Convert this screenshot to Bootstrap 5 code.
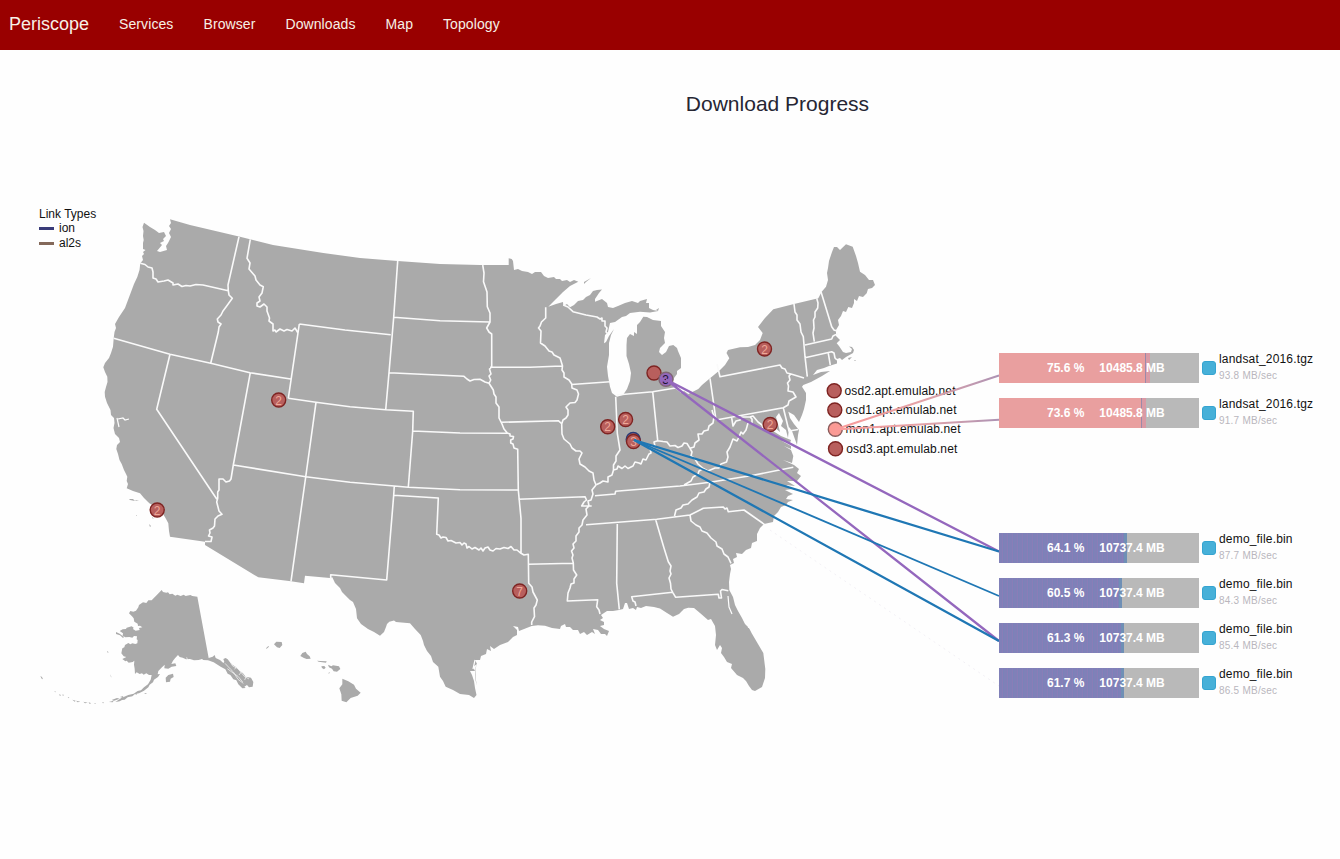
<!DOCTYPE html>
<html lang="en">
<head>
<meta charset="utf-8">
<meta name="viewport" content="width=device-width, initial-scale=1">
<title>Periscope - Download Progress</title>
<link rel="stylesheet" href="https://cdn.jsdelivr.net/npm/bootstrap@5.3.0/dist/css/bootstrap.min.css">
<style>
body{font-family:"Liberation Sans",Arial,sans-serif;background:#fefefe;color:#111;font-size:12px}
.topbar{background:#900;height:50px;padding:0 0 2px 9px}
.topbar .navbar-brand{font-size:18px;color:#f7f0e6;margin:0 15px 0 0;padding:0}
.topbar .navbar-nav .nav-link{font-size:14px;letter-spacing:.09px;color:#f7f0e6;padding:0 15px}
.stage{height:809px}
.page-title{font-size:21px;line-height:24px;color:#262633;padding:42px 0 0 215px;margin:0}
.canvas-map{position:absolute;left:0;top:-50px;pointer-events:none}
.legend-box{margin:91px 0 0 39px;line-height:14px}
.legend-box i{width:15px;height:3px;display:block}
.legend-ion{background:#393b79}
.legend-al2s{background:#84695a}
.legend-row + .legend-row{margin-top:1px}
.downloads{margin-top:237px;width:341px;gap:15px}
.dl{height:30px}
.dl-gap{margin-top:90px}
.meter{width:200px;height:30px;background:#b9b9b9;font-weight:bold;color:#fff;line-height:30px}
.meter-fill{height:30px}
.fill-red{background:linear-gradient(90deg,transparent calc(100% - 5px),#9a8aaa calc(100% - 5px),#9a8aaa calc(100% - 4px),#d99aa5 calc(100% - 4px)),#e99f9f}
.fill-blue{background:linear-gradient(90deg,transparent calc(100% - 3px),#6f8fb5 calc(100% - 3px)),repeating-linear-gradient(90deg,#8080b8 0 3px,#8a7db7 3px 4px,#7a83b8 4px 5px)}
.meter-text{position:absolute;inset:0;padding-left:48px;gap:15px}
.swatch-sq{width:14px;height:14px;border-radius:3px;background:#47b0d8;border:1px solid #35a4d1;margin:8px 3px 0}
.fname{line-height:14px;margin-top:-1px;letter-spacing:.18px}
.rate{font-size:10px;line-height:12px;margin-top:4px;color:#b9b6bd;letter-spacing:.24px}
</style>
</head>
<body>
<nav class="navbar navbar-expand topbar">
  <a class="navbar-brand" href="#">Periscope</a>
  <div class="navbar-nav">
    <a class="nav-link" href="#">Services</a>
    <a class="nav-link" href="#">Browser</a>
    <a class="nav-link" href="#">Downloads</a>
    <a class="nav-link" href="#">Map</a>
    <a class="nav-link" href="#">Topology</a>
  </div>
</nav>
<main class="stage position-relative overflow-hidden">
  <h1 class="page-title text-center fw-normal">Download Progress</h1>
  <svg class="canvas-map" width="1340" height="859" viewBox="0 0 1340 859" font-family="Liberation Sans, Arial, sans-serif" font-size="12">
    <defs>
      <linearGradient id="fade" x1="835" x2="999" y1="0" y2="0" gradientUnits="userSpaceOnUse"><stop offset="0" stop-color="#fb9a99"/><stop offset=".55" stop-color="#e2a3a8"/><stop offset="1" stop-color="#ad93b4"/></linearGradient>
    </defs>
    <!-- contiguous states -->
    <path fill="#aaa" d="M144 222.700L142.500 227 143.500 231 143 236 143.700 240 143 243 143 249 145.500 250 143 252 144 254 142 256 143 260 140.300 263.300 139.500 270 137.300 277 134 284 131 292 128 300 125 308 119 317 115 324 116 328 114.500 332 113.700 338.300 113 346.700 111 353 109 358 105 363 103.300 367.300 105 372 107.300 376.700 107.500 382 106 387 104.700 392 105 396.700 107 403 110.500 410 111 415 114 418 114.500 423 113.500 428 115 434 119 438 120 442 117 445 116.300 449 118 454 119.500 460 121.700 464 124 470 126 474 127.300 476.700 126.700 481 128 484 126.700 488.300 133 491 140 493.300 144 498 149.300 503.300 158 508 161.700 511.700 165.500 518 168.300 523.300 169 531 170 536.700 205 541.700 205 545 258.300 577.300 291 581.300 304 583.300 305 575.700 330 578 332.300 577.300 335 583 340 588 342 592 346.700 596.700 350 600 353 602 356 609 357 618.300 361 624 368 629 374 632 380 635.700 384 632 386 627 387 624 389.300 621.700 394 620.500 396 622 410 623.300 415 629 420.700 635 423 641 424 645 427 651 431 656 433 662 438.300 666.700 440 676.700 443 681 445.700 686.700 453 690 460 694 469 695 474 698 476.500 695 475 688 474 681 472 675 470 671 475 671 473 667 477 664 475 660 480 660 481 656 486 654 487 649 491 651 490 646 494 649 500 645 508 642 513 637 517 635 517 630 513 626 518 627 519 631 531.700 626 538 625.300 545 625.700 552 628 560 629 561 626 565 624 566 627 570 627 573 630 578 630 580 634 584 632 587 635 592 632 595 634 593 629 598 630 601 634 605 634 607 636 609 631 604 629 600 626 604 625 604 622 600 620 603 618 601 615 607 611 613 611 619 610 623 609 625 603 627 603 629 609 633 608 636 610 637 607 641 608 646 606 654 607 660 608.500 667 613 673 616.700 679 614 684 609 688.300 607.700 694 608 700 613 708 620 711 619 715 626 716 635 715 645 717 650 720 645 722 648 721 653 724 657 727 662 732 664 731 668 737 675 743 678 746 681 749 686 752 690 755 691 762 687 765 678 765.300 669 763.300 653 758 644 751.700 633.300 749 628 745 624 742 618 738 611 735 605 733 597 729.300 590 729 582 730 574 731 569 730 565 734 563 733 559 737 557 736 553 742 554 746 550 751 548 752 543 757 541 757 534 760 528 764 524 773 522 774 516 778 512 781 507 786 505 788 502 793 500 786 499 788 496 793 494 785 490 792 489 786 485 795 486 787 481 797 481 801 476 797 473 799 469 794 465 783 460 792 463 793.300 456 791 450 784 446 791 449 791 446 782 441 790 443 791 440 781 436 773 431 768 427 774 427 780 432 778 424 776 417 779 413 783 421 781 426 786 430 788 438 789 427 792 431 797 445 798 435 799 430 794 424 790 418 788.300 411.700 794 415 799 422 802 415 804 409 806 400 806 393 802 386.700 803.300 385 811 382 822 376 830 371 821 372 813 375 817 370 824 368 829 366 837 363.500 837 359 840 358 842 360 846 357 853 353 854 350 852 347 849 346.500 852 349 851 352 846 353 843 352 839 346 836.700 343.300 840 340 836 336 836 330 839 325 838 320 841 316 843 311 846 312 848.300 307 852 308 854 303 854 299 857 301 859 296 863 297 866.700 293.300 868 289 872 288 875 285 873 280 869 280 865 275 860 271.700 858 263 856 256 852.700 246.700 846 244.300 840 250 837 247 834 247 832 252 829 261 828 268 827 273 828 280 826 286.700 821.700 291.700 818.300 298.300 794 304 773.300 309.300 765 318 758 327 762.700 333 760 340 755 345 748 347 740 347.300 728 350 726.500 353 729.300 358.300 725 365 720 370 710 378.300 702 385 698.300 389 688.300 394 684 391 681 393 676 389 671.700 385 674 378 677 374 677 371 681 368 681 358 678 351 677 348 673.300 345 669 346 666 352 662 355 659 352 660 348 665 343 664 338 665 332 661 326 661 321 653 320 647 317 643.300 316.700 640 322 637 325 637 334 634 332 634 336 630 334 627 338 626.500 345 626.500 356 629 364 631 373 630 381 627 389 623 395 617 396.700 612 393 610 386.700 608 376 607 366.700 609 355 609 343 611 335 614 329 609 336 606 342 604 343.300 605 335 608 332 610 323 615 322 622 317 626 316 630 313 640 311.700 650 312.500 658.300 311 653 310 649 308 649 303 646 303 647 299 640 301 638 303 632 301 625 303 618 306 613 308 608 307 607 303 602 299 595 301.700 595 299 599 293 602 289.500 597 290 593 291 590 295 586 297 583 300 578 301 574 305 570 307.300 567 304 563.300 306 563 302 556 304 548.300 306.700 556 299 563 292 570 286 578.300 281.700 574 280 570 282 567 280 562 281 560 279 556 279 554 277 548 278 544 276 541 272 535 272 532 274 528 272 522 271 518 269 514 270 513 261 511.700 259 508.700 258.300 508.700 265 480 265 440 264 397.700 261 360 258 323.300 253 273 245 240 236.700 190 225 170 219.300 171 223 169 226 171 229 169 233 171 237 168 243 166 246 167 250 160 252 157 251 162 245 160 243 164 241 163 239 166 236 164 232 159 233 155 230 150 227Z"/>
    <path fill="none" stroke="#fefefe" stroke-width="1.200" d="M117 418l2 9M118 419l5-1 2 2 4-1M164 223l3 4 1 4M747 624l5 5-4-2M728 596l1 11 3 7M475 660l-2 9"/>
    <path fill="#aaa" d="M584 282l7-4-5 4-2 2zM477 662q-4 12 0 24q-3-13 0-24zM129 499l4 0 2 2-5-1zM135 500l4 1-3 0zM136 515h1v1zM149 524l2 2-1 1zM152 517l2 2-2-1zM848 358l4-1-3 3zM855 360l1 1-2 0zM656 310l3-2-1 3z"/>
    <!-- state borders -->
    <path fill="none" stroke="#fafafa" stroke-width="1.600" stroke-linejoin="round" d="M140.300 263.300L145 264.500 148 267 152 268 153 272 153 278 156 279 158 282 164 281 168 280 173 283 173 285 178 284 182 286.500 186 285.500 190 286 196 284.500 203 285 228.300 290.700M239 236.700L228 285 228.300 290.700 229 295 232.300 298.300 226 307 223 311 221 315 217.300 319 218 322 221 324 219 327 218.300 332 210.700 363.300M250.300 239.300L247 258.300 250 263 249 269 255 276 256 280 260 285 263.300 286.700 262 293 259 297 260 301 257 303 257 306 260 307 264 304 267 307 267 311 269.500 318 269 321 273 324 273 331 275 330 276 332 280 329 284 331 287 329.500 292 331 295 328 298 333M299.300 324L345 330 390.700 334.700M299.300 324L288.300 398.300M113.700 338.300L170 354.300 210.700 363.300 250 372.700 290.700 379M170 354.300L156.700 409.300 216.700 499M250.300 372.700L233.300 465 231 479 229.500 481 226 482 223 479 219 479 219 490 217.700 492 217.700 498.300 216.700 502 218 507 219 511 222 514.300 218 516 215 519 214.500 526 213 528 209.500 530 210 533 208.500 536 212 537 211 541.500H205M233.300 465L305.700 476.700 350 482.300 394.300 486 408.300 487.300 460 489.700 518.300 490M288.300 398.300L316 402.300 350 406.700 385.700 409.700 413.300 411.300 412.700 431 408.300 487.300M316 402.300L305.700 477 291 581.300M397.700 261L393.700 317.300 389 372.700 385.700 409.700M393.700 317.300L440 320.700 490 322M482.700 265L484 273 483.500 281.700 487 292 487.300 306.700 490 313V322L486.700 328 489 332 491.700 334V367L489.500 369 491 374 489 376 490.700 380 489 383.300M389 372.700L464 376.300 467 379 470 381 474 379.500 480 379.300 485 382 489 383.300 493.300 390 494 394 496 397 496 403 499 407 499 418 502 424 504 429 507.300 433 510 434 510 436 513.500 436.500 513 439 510.700 440 510.700 443 513 444 514 448 517.700 449.300 518.300 490 521 518.300V553.300L524 555 528.300 554.300 528.700 583.300 532 587 533 592 537.300 600 536 605 534 608 534.500 616.700 531.700 622V625M412.700 431L460 433 507.300 433.300M394.300 486L393.700 495.300 386.700 580 330.700 574.700V579M393.700 495.300L438.300 498 436.700 534.300 439 535 441 538 443 537 446 537.500 448 541 451 540.500 456 543 460 542.500 462 545 464 543 466 544 467 548 469 546.500 472 549 475 547.500 479 550 481 548 483 551 485 548 488 547 490 550 493 551 496 548.500 500 549 504 547.500 508 548.500 511 546.500 514 550 517 550 521 553.300M528.300 564.300L573.300 563.300M518.300 499.300L585 496.700 586.500 500 584 502 581.700 506H591.700M490 367.300L530 367.300 561.700 366M501 422.300L558.300 420.700 562 424M545.700 307.300V318L541.500 322 540 326 538.500 328 541 331 540.500 343 545 346 549 351 552 352 554 355 560 358 561 361 562.500 366 562 370 564 373 564 377 569 380 571.700 384 572 388 577 390 578.500 394 577 400 575 402.500 570 403 566 407 568 410 568 415 566 418 563 420 561.700 424 562 434 564 439 570 444 572 448 576 451 580 451 582 453 579 459 580 464 585 467 589 471 593 473 594 480 596 485 592 490 593 494 591 500 588 501 589 506 586 509 587 515 583 520 582 525 579 528 579 532 576 536 576 541 573 544 574 548 571.500 551 573 555 572 558 573.300 563 573.500 570 576.700 575 574 579 574 583 571 584 570 588 568 593 567.300 601 597.700 599.700 596.700 606.700 599 610 600 614M571.700 384.500L610 381.700M563.300 305L568 307 573 311.700 586 315 597 317 600 319 602 318 602 321 605 321 605 326 607 328 606 332 608 334M616.700 395L652.700 391.700 680 387.300M615.700 396.700L617.300 433.300 620 450 616 456 616 461 613.500 465 613.500 470 612 475 608 477 608 482 603 481 600 483 596.700 484.500M652.700 391.700L657.700 440.700 663 441.500 667 442 670 446 675 445.500 678 447.500 682 446 684 443 687 443.500 690 448.300 694 447 695 443 699 440 698 434 702 434 704 431 708 430 709 426 713 423 714 417 712 410M613.500 470L617 469 618 466 622 468.500 625 466 628 468.500 633 466 635 462 639 463 641 464 643 459 646 460 649 454 651 453 650 448 655 446 654 442 657.700 440.700M710 378.300L716 420M690 448.300L692 452 691 456 695 459 698 464 703.300 468.500 699 471 698 474 693 477 691 481 684 485M703.300 468.500L708 471 715 468 719 468 721 464 726.500 462 728 457 727 452 730 447 733 439 737 441 739 437 741 432 743 434 746 430 748 423 752 423 752 419 750 417M716 420L783.300 407.700M731.700 418L733 426 736 421 740 420 742 417 750 417 753 416 758 422 762 425 763 428M783.300 407.700L789 431 798.300 429.500M783.300 407.700L788 405 789 401 796 397 793 392 788 391 788.500 386 787.500 383 790 380 789 376 791 374M717 364L720 376.700 780 365 782 368 785 369 787 373 791 374 804 378M794 304L795 312 797 315 797 320 800 324 801 332 803.300 336.700 805 356.700 807.300 376.700M816.700 298.300L818 303 817.700 308 815 312 815 317 813.500 320 814 328 813 333 814.300 341.700M805 345L831.700 339 833 336 835 335 838 334M805 357.700L831.700 351.700 834 353 835 358 837 360M828.300 353.300L830.300 365M821 291.700L831.700 326.700 834 330 837 331M595 495.700L615 494 615.700 491.300 680 486 710 482.300 752 475.500 793.300 467.300M586 524.700L656.700 519.300 690 515 703.300 508.300 723.300 507 725 509 727 508 728.300 511.700 744 510 764.300 524.300M710 482.300L709 487 706 489 704 492 699 493 697 497 692 500 688 504 683 505 681 508 676 510 674.500 516M617.300 522.700L616.700 583.300 619.300 609.300M655.700 519.700L664 548 668.300 561.700 671 566 670 571 671 574 669 578 670.500 583.300 671 589 672.700 592.300 675.700 597.300 718.300 594.300 719 598 721.500 598 720.500 591 722 589.500 728.300 590.700M672.700 592.300L631.700 596.700 633 601 635 602 636 606M690 515L691 521 696 525 700 527 702 531 707 533 711 538 716 542 717 546 722 549 724 554 728 557 731 563.300"/>
    <!-- Alaska and Hawaii -->
    <g fill="#aaa" transform="translate(20 570) scale(.33333)">
      <path d="M425 60l4 6 10 2 5-1 5 6 8-2 9 6 6-3 10 4 9-4 6 4 14-3 6 3 15 2 34 184 12-4 6-5 3 9 13 6 10 9 3-3-3-9 7-3 6 4 14 16 12 8 10 10 10 8 8 10 16 3 7 13-2 14-11 2-6-7-8 5 4 4-10 1-12-12-6-12-9-3-9-13-8-4-7-13-14-8-21-13-17-6-14-1-4-3-10 3-14 1-12-4-12 1-10-5-9-2-5-6-9 10-6 7-5 10 12-2 3 8-14 2-10 6-12-1 1-11-8 8-11 11-2 10 7-1-6 9-12 8-3 8-10 7-4 8-13 10-15 8-12 2-8 7-14 3-9 7-8 1-7 4-13 2 18-12 21-9 16-4 12-8 10-2 9-9 12-9 8-14 3-14-8 0-8-5-8 4-5-4-7 2-9-5-5 5-1-16-2-12 1-12-5 4-12 2-6-6-4 2-9-7 12-6-8-2-7-9 3-15 6-3 2-7 10-6 6 4 6-3 9 2 6-2 1-10-3-2 1-9-9-1-5 5-9-2-12 1-8-5 1-7-10-7 9-5 10-1 2-4 15-4 6 4-2 4 8 5 12-2-2-6 10-2-7-5-6 1-1-7-10-6-2-10-5-6-9-9 4-7 9 2 8-3 7-10 2-7 12-8 10 2 6-8 10 0zM437 323l8-8 14-4 2 10-9 5-2 9-12 2zM312 264l11-3 6 7-6 4zM288 186l11 5 13 10-3 3-9-8-12-4zM61 318l5 3 3 7-4-2zM261 242l5 5-3 1zM103 362l6 5-4-1zM117 373l6 2-3 3zM125 374h7l-2 3zM143 382h5l-2 3zM157 389l10 3-3 3zM168 392l13 3-8 2zM190 395l13 3-8 2zM206 397l8 3-6 1zM221 399h6v2zM245 398l7-1-2 3zM267 396l14-4-3 5zM275 390l16-6 8 2-17 6zM300 381l10-3-2 5zM346 373l5-3-2 5zM372 370l9-1-4 3zM271 313l4 10-3-4z"/>
      <path fill="none" stroke="#fefefe" stroke-width="2" d="M615 280l17 18 8 8 14 22 16 12M626 268l12 20 15 7 20 24 14 8M622 296l20 15 12 8 14 17M645 282l17 16 20 12 12 11M650 288l-6 10M664 306l-7 9M680 316l-6 14M500 262l4 12"/>
      <path d="M738 235l7-7 2 2-7 6zM762 223l7-8 16 1 2 9-8 9-8-2zM841 258l6-9 10-4 4 7 8 7 3 7-12 1-8-3zM891 272l10 1 19 1-2 4-22-3zM904 289l9-1 4 5-5 5-6-4zM924 284l10 5 5-3 18 3 4 8-10 8-10-1-5-8-9-4zM925 309l5-3-3 5zM967 326l18 8 17 10 6 12 14 12-9 9-21 7-13 13-14-5-1-19-6-18 9-12z"/>
    </g>
    <!-- clustered hosts -->
    <g fill="#b85f5d" stroke="#7e2422" stroke-width="1.400">
      <circle cx="278.700" cy="400" r="7"/><circle cx="157.200" cy="510" r="7"/><circle cx="519.700" cy="591" r="7"/><circle cx="607.700" cy="426.700" r="7"/><circle cx="625.600" cy="419.500" r="7"/><circle cx="764.500" cy="349" r="7"/><circle cx="770.200" cy="424.500" r="7"/><circle cx="654" cy="373" r="7"/>
      <circle cx="633.200" cy="439.500" r="7" stroke="#273a77"/><circle cx="633.500" cy="441.500" r="7"/>
      <circle cx="834.200" cy="390.700" r="7"/><circle cx="834.800" cy="410" r="7"/><circle cx="835.500" cy="448.700" r="7"/>
      <circle cx="835.300" cy="429.300" r="7" fill="#fb9a94" stroke="#8a5c5c"/><circle cx="666" cy="379.300" r="7" fill="#9467bd" stroke="#806573"/>
    </g>
    <g fill="#eea898" text-anchor="middle"><text x="278.700" y="404.500">2</text><text x="157.200" y="514.500">2</text><text x="519.700" y="595.500">7</text><text x="607.700" y="431">2</text><text x="625.600" y="424">2</text><text x="764.500" y="353.500">2</text><text x="770.200" y="429">2</text><text x="633.500" y="446">3</text><text x="665.500" y="383.500" fill="#1b1230">3</text></g>
    <g fill="#111"><text x="844.500" y="395" textLength="111">osd2.apt.emulab.net</text><text x="845.500" y="414" textLength="111">osd1.apt.emulab.net</text><text x="845.500" y="433" textLength="115">mon1.apt.emulab.net</text><text x="846.300" y="453" textLength="111">osd3.apt.emulab.net</text></g>
    <!-- transfer paths -->
    <g fill="none" stroke-width="2.300"><path stroke="#e9e6ef" stroke-width=".6" stroke-dasharray="2 4" d="M770 530L999 686"/><path stroke="url(#fade)" stroke-width="1.900" d="M835 429.500L999 375.500M835 429.500L999 419.700"/><path stroke="#9467bd" d="M999 551.500L666 379.500 999 641"/><path stroke="#1f77b4" d="M999 551.500L634 440 999 641"/><path stroke="#1f77b4" stroke-width="1.900" d="M634 440L999 596"/></g>
  </svg>
  <div class="d-flex justify-content-between position-relative">
    <div class="legend-box">
      <div>Link Types</div>
      <div class="legend-row d-flex align-items-center"><i class="legend-ion"></i><span class="ms-1">&#8202;ion</span></div>
      <div class="legend-row d-flex align-items-center"><i class="legend-al2s"></i><span class="ms-1">&#8202;al2s</span></div>
    </div>
    <div class="downloads d-flex flex-column">
      <div class="dl d-flex"><div class="meter position-relative"><div class="meter-fill fill-red" style="width:75.6%"></div><div class="meter-text d-flex"><span>75.6 %</span><span>10485.8 MB</span></div></div><span class="swatch-sq"></span><div><div class="fname">landsat_2016.tgz</div><div class="rate">93.8 MB/sec</div></div></div>
      <div class="dl d-flex"><div class="meter position-relative"><div class="meter-fill fill-red" style="width:73.6%"></div><div class="meter-text d-flex"><span>73.6 %</span><span>10485.8 MB</span></div></div><span class="swatch-sq"></span><div><div class="fname">landsat_2016.tgz</div><div class="rate">91.7 MB/sec</div></div></div>
      <div class="dl dl-gap d-flex"><div class="meter position-relative"><div class="meter-fill fill-blue" style="width:64.1%"></div><div class="meter-text d-flex"><span>64.1 %</span><span>10737.4 MB</span></div></div><span class="swatch-sq"></span><div><div class="fname">demo_file.bin</div><div class="rate">87.7 MB/sec</div></div></div>
      <div class="dl d-flex"><div class="meter position-relative"><div class="meter-fill fill-blue" style="width:61.3%"></div><div class="meter-text d-flex"><span>60.5 %</span><span>10737.4 MB</span></div></div><span class="swatch-sq"></span><div><div class="fname">demo_file.bin</div><div class="rate">84.3 MB/sec</div></div></div>
      <div class="dl d-flex"><div class="meter position-relative"><div class="meter-fill fill-blue" style="width:62.3%"></div><div class="meter-text d-flex"><span>61.3 %</span><span>10737.4 MB</span></div></div><span class="swatch-sq"></span><div><div class="fname">demo_file.bin</div><div class="rate">85.4 MB/sec</div></div></div>
      <div class="dl d-flex"><div class="meter position-relative"><div class="meter-fill fill-blue" style="width:62.4%"></div><div class="meter-text d-flex"><span>61.7 %</span><span>10737.4 MB</span></div></div><span class="swatch-sq"></span><div><div class="fname">demo_file.bin</div><div class="rate">86.5 MB/sec</div></div></div>
    </div>
  </div>
</main>
<script src="https://cdn.jsdelivr.net/npm/bootstrap@5.3.0/dist/js/bootstrap.bundle.min.js"></script>
</body>
</html>
